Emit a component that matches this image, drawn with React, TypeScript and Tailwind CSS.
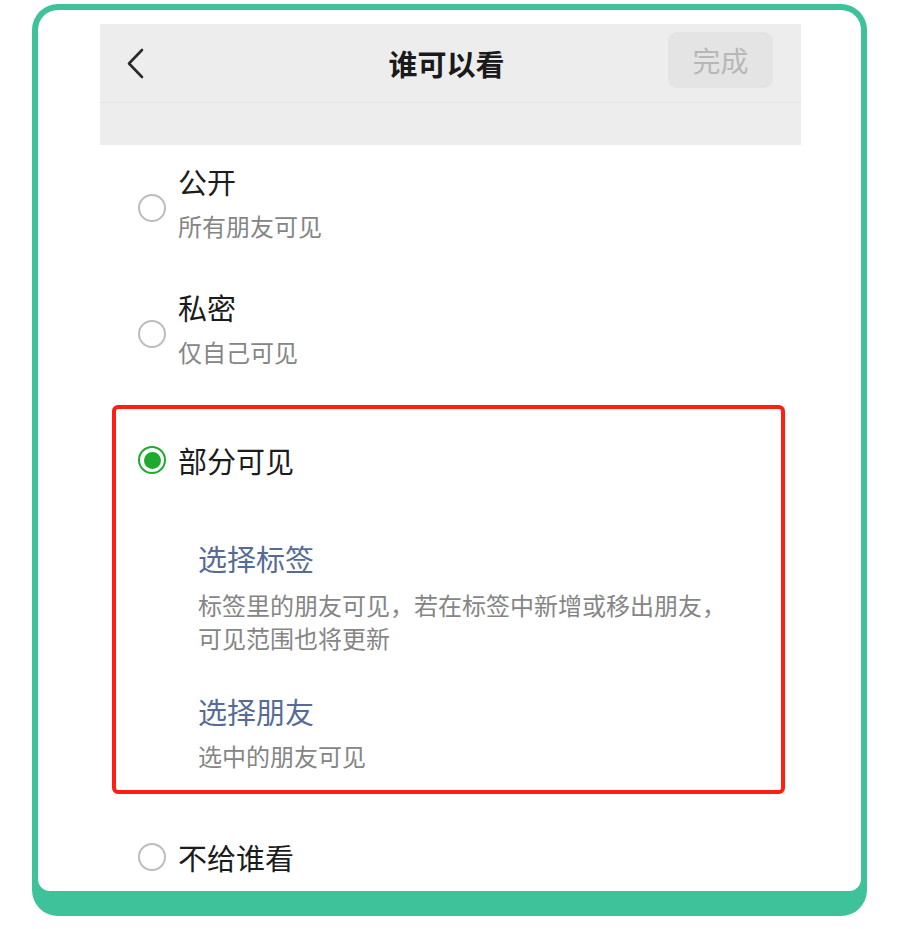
const Radio = ({ checked = false }: { checked?: boolean }) =>
  checked ? (
    <span className="flex h-[28px] w-[28px] shrink-0 items-center justify-center rounded-full border-[2.5px] border-[#1DAA2E] bg-white">
      <span className="block h-[17px] w-[17px] rounded-full bg-[#1DAA2E]" />
    </span>
  ) : (
    <span className="block h-[28px] w-[28px] shrink-0 rounded-full border-2 border-[#bdbdbd] bg-white" />
  );

function Option({ title, desc }: { title: string; desc: string }) {
  return (
    <div className="flex items-center gap-3 pb-[30px] pl-[38px] pt-[18px]">
      <div className="mt-[12px] shrink-0">
        <Radio />
      </div>
      <div className="flex flex-col gap-[12px]">
        <div className="text-[29px] leading-[36px] text-[#1c1c1c]">{title}</div>
        <div className="text-[24px] leading-[30px] text-[#858585]">{desc}</div>
      </div>
    </div>
  );
}

export default function App() {
  return (
    <div className="h-[929px] w-[900px] bg-white pl-[32px] pr-[33px] pt-[4px] font-['Noto_Sans_CJK_SC','Noto_Sans',sans-serif]">
      <div className="rounded-[26px] bg-[#3DC29A] px-[6px] pb-[25px] pt-[6px]">
        <div className="h-[881px] overflow-hidden rounded-b-[12px] rounded-t-[20px] bg-white pl-[62px] pr-[60px] pt-[14px]">
          {/* Nav bar */}
          <div className="bg-[#ededed]">
            <div className="flex h-[79px] items-center border-b border-[#e4e4e4]">
              <div className="flex w-[129px] items-center pl-[26px]">
                <svg width="18" height="31" viewBox="0 0 18 31" fill="none">
                  <path d="M16 2 L3 15.5 L16 29" stroke="#2a2a2a" strokeWidth="2.6" strokeLinecap="round" strokeLinejoin="round" />
                </svg>
              </div>
              <div className="flex-1 text-center text-[29px] font-bold leading-[36px] text-[#1a1a1a]">谁可以看</div>
              <div className="flex w-[137px] justify-end pr-[28px]">
                <div className="-mt-[6px] flex h-[56px] w-[105px] items-center justify-center rounded-[9px] bg-[#e4e4e4] text-[28px] text-[#b7b7b7]">
                  完成
                </div>
              </div>
            </div>
            <div className="h-[42px]" />
          </div>

          <Option title="公开" desc="所有朋友可见" />
          <Option title="私密" desc="仅自己可见" />

          {/* Partially visible */}
          <div className="ml-[12px] mr-[16px] mt-[8px] rounded-[6px] border-4 border-[#FF1E12] pb-[18px] pt-[33px]">
            <div className="flex items-center gap-3 pl-[22px]">
              <Radio checked />
              <div className="text-[29px] leading-[36px] text-[#1c1c1c]">部分可见</div>
            </div>
            <div className="pl-[82px]">
              <div className="mt-[62px] text-[29px] leading-[36px] text-[#576B95]">选择标签</div>
              <div className="mt-[12px] text-[24px] leading-[33px] text-[#858585]">
                标签里的朋友可见，若在标签中新增或移出朋友，
                <br />
                可见范围也将更新
              </div>
              <div className="mt-[39px] text-[29px] leading-[36px] text-[#576B95]">选择朋友</div>
              <div className="mt-[10px] text-[24px] leading-[33px] text-[#858585]">选中的朋友可见</div>
            </div>
          </div>

          <div className="mt-[45px] flex items-center gap-3 pl-[38px]">
            <Radio />
            <div className="text-[29px] leading-[36px] text-[#1c1c1c]">不给谁看</div>
          </div>
        </div>
      </div>
    </div>
  );
}
